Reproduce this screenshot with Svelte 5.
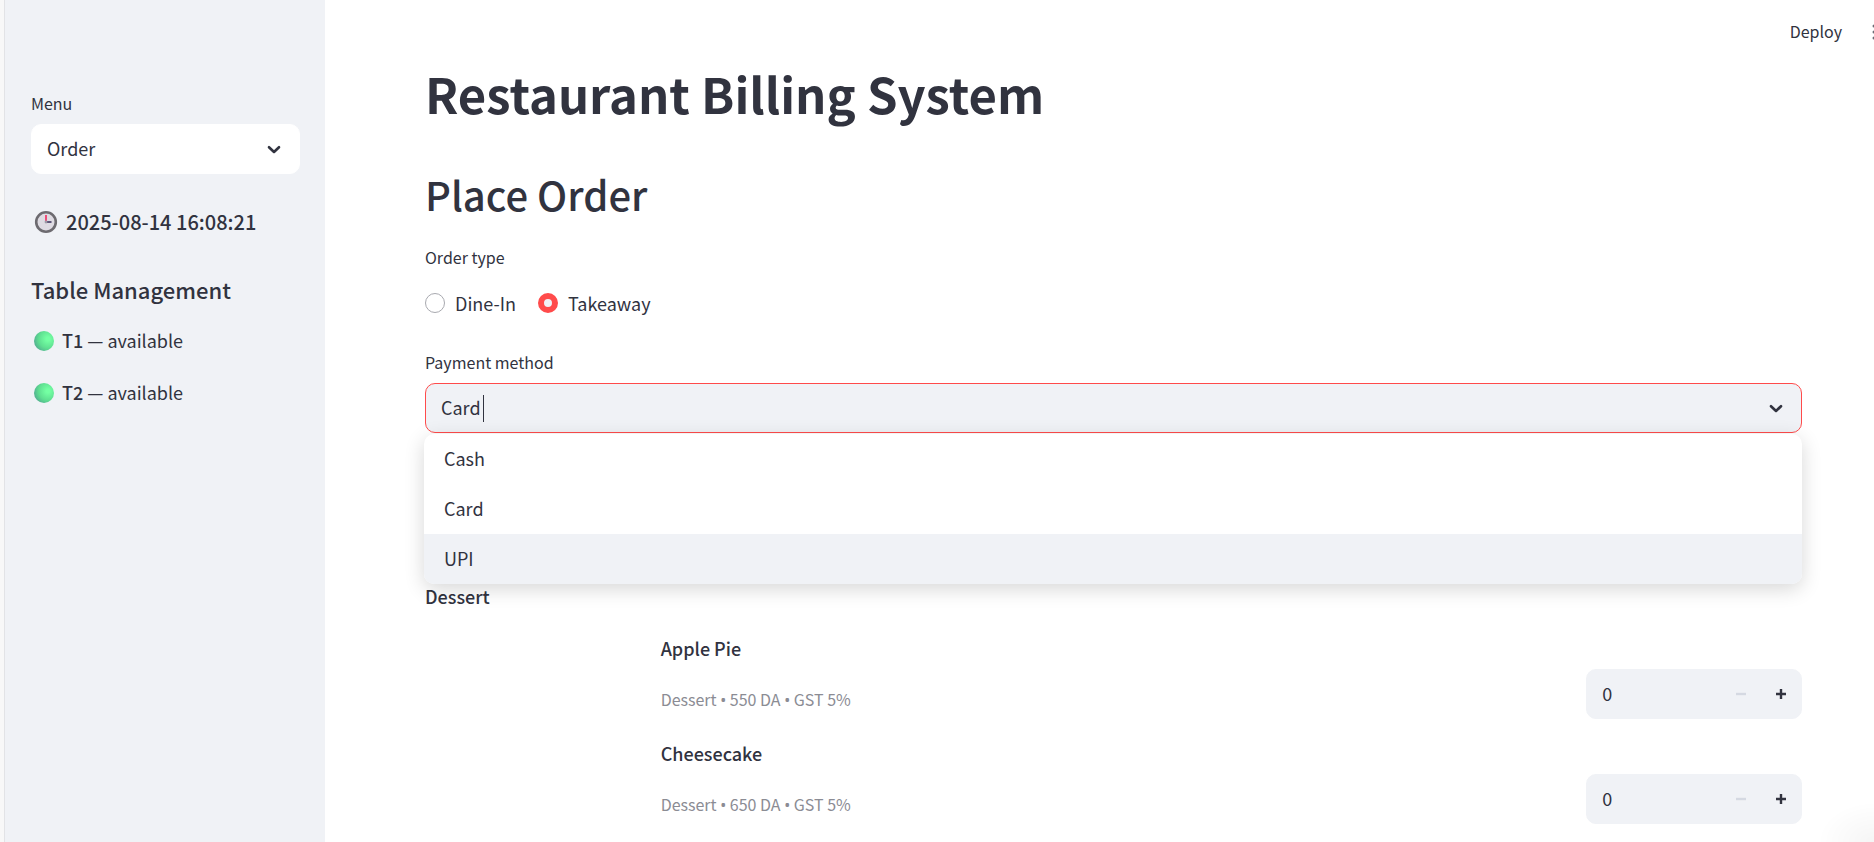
<script>
  let menu = $state('Order');
  let orderType = $state('Takeaway');
  let payment = $state('Card');
  const methods = ['Cash', 'Card', 'UPI'];
  const tables = [
    { name: 'T1', status: 'available' },
    { name: 'T2', status: 'available' }
  ];
  let items = $state([
    { id: 'apple-pie', name: 'Apple Pie', price: 550, qty: 0 },
    { id: 'cheesecake', name: 'Cheesecake', price: 650, qty: 0 }
  ]);
</script>

{#snippet chevron()}
  <svg class="chevron" viewBox="0 0 14 10" aria-hidden="true"><path d="M2 2.2 L7 7 L12 2.2" /></svg>
{/snippet}

<div class="app">
  <aside>
    <div class="field">
      <label for="menu">Menu</label>
      <div class="control light">
        <select id="menu" bind:value={menu}>
          <option>Order</option>
        </select>
        {@render chevron()}
      </div>
    </div>

    <h4>
      <svg class="clock" viewBox="0 0 24 24" aria-hidden="true">
        <circle cx="12" cy="12" r="9.8" fill="#dedbe2" stroke="#6d6b70" stroke-width="2.6" />
        <path d="M12 12V5" stroke="#ee4d78" stroke-width="2" />
        <path d="M12 12H17.5" stroke="#3e3560" stroke-width="1.6" />
        <circle cx="12" cy="12" r="1.4" fill="#9c99a5" />
      </svg>
      <time>2025-08-14 16:08:21</time>
    </h4>

    <h3>Table Management</h3>
    <ul>
      {#each tables as t}
        <li><span class="dot"></span><span class="status"><strong>{t.name}</strong> — {t.status}</span></li>
      {/each}
    </ul>
  </aside>

  <div class="page">
    <header>
      <button class="deploy">Deploy</button>
      <button class="more" aria-label="Options">
        <svg viewBox="0 0 4 18" aria-hidden="true">
          <circle cx="2" cy="3" r="1.5" /><circle cx="2" cy="9" r="1.5" /><circle cx="2" cy="15" r="1.5" />
        </svg>
      </button>
    </header>

    <main>
      <h1>Restaurant Billing System</h1>
      <h2>Place Order</h2>

      <fieldset>
        <legend>Order type</legend>
        <div class="radios">
          {#each ['Dine-In', 'Takeaway'] as option}
            <label><input type="radio" name="order-type" value={option} bind:group={orderType} />{option}</label>
          {/each}
        </div>
      </fieldset>

      <div class="field">
        <label for="payment">Payment method</label>
        <div class="control focused">
          <input id="payment" type="text" role="combobox" aria-expanded="true" aria-controls="methods" bind:value={payment} />
          <span class="caret"></span>
          {@render chevron()}
          <ul class="options" id="methods" role="listbox">
            {#each methods as m}
              <li role="option" aria-selected={m === payment} class:active={m === 'UPI'}>{m}</li>
            {/each}
          </ul>
        </div>
      </div>

      <section>
        <h5>Dessert</h5>
        {#each items as item}
          <div class="item">
            <div class="info">
              <label for={item.id}>{item.name}</label>
              <p>Dessert <span class="bullet">•</span> {item.price} DA <span class="bullet">•</span> GST 5%</p>
            </div>
            <div class="control stepper">
              <input id={item.id} type="text" inputmode="numeric" bind:value={item.qty} />
              <button aria-label="Decrease" disabled={item.qty <= 0} onclick={() => item.qty--}>
                <svg viewBox="0 0 10 10" aria-hidden="true"><path d="M0 5H10" /></svg>
              </button>
              <button aria-label="Increase" onclick={() => item.qty++}>
                <svg viewBox="0 0 10 10" aria-hidden="true"><path d="M0 5H10M5 0V10" /></svg>
              </button>
            </div>
          </div>
        {/each}
      </section>
    </main>
  </div>
  <div class="glow"></div>
</div>

<style>
  :global(body) { margin: 0; overflow: hidden; }
  * { box-sizing: border-box; }
  .app {
    display: flex;
    min-height: 100vh;
    background: #fff;
    border-left: 4px solid #f8f8f8;
    color: #31333f;
    font: 18px/32px "Noto Sans CJK SC", "Noto Sans", sans-serif;
  }
  h1, h2, h3, h4, h5, p, ul, fieldset { margin: 0; padding: 0; border: 0; }
  ul { list-style: none; }
  input, select, button { font: inherit; color: inherit; border: 0; background: none; padding: 0; margin: 0; outline: 0; }
  aside {
    flex: 0 0 321px;
    background: #f0f2f6;
    border-left: 1px solid #e2e3e6;
    padding: 90px 25px 0 26px;
  }
  .field > label, legend { display: block; font-size: 16px; line-height: 28px; padding: 0; }
  .field > label { line-height: 26px; margin-bottom: 8px; }
  .control {
    position: relative;
    display: flex;
    align-items: center;
    height: 50px;
    border-radius: 10px;
    background: #f0f2f6;
    border: 1px solid #f0f2f6;
  }
  .light { background: #fff; border-color: #fff; }
  .control select, .control input { flex: 1; min-width: 0; width: 100%; height: 100%; padding: 0 0 2px 15px; appearance: none; }
  .chevron { position: absolute; top: 20px; right: 18px; width: 14px; height: 10px; pointer-events: none; }
  .chevron path { fill: none; stroke: #31333f; stroke-width: 2.6; stroke-linecap: round; stroke-linejoin: round; }
  h4 { display: flex; align-items: center; gap: 8px; margin-top: 32px; padding-left: 3px; font-size: 20px; line-height: 32px; font-weight: 500; }
  .clock { width: 24px; height: 24px; }
  h3 { margin-top: 35px; font-size: 22px; line-height: 32px; font-weight: 500; }
  aside ul { display: grid; gap: 18px; margin-top: 19px; }
  aside li { display: flex; align-items: center; gap: 8px; padding-left: 3px; }
  .status { padding-bottom: 2px; }
  .dot { width: 20px; height: 20px; border-radius: 50%; background: radial-gradient(circle at 70% 40%, #74ffa3 10%, #5fdf91 50%, #4a948f 95%); }
  strong, h5, .info label { font-size: 18px; font-weight: 500; }

  .page { flex: 1; min-width: 0; }
  header { display: flex; align-items: center; justify-content: flex-end; gap: 30px; height: 64px; overflow: hidden; }
  .deploy { font-size: 16px; padding-bottom: 2px; }
  .more { width: 2px; height: 18px; overflow: hidden; }
  .more svg { display: block; width: 4px; height: 18px; fill: #6b6c75; }
  main { padding: 0 72px 0 100px; }
  h1 { font-size: 49px; line-height: 58px; font-weight: 700; }
  h2 { margin-top: 45px; font-size: 40px; line-height: 54px; font-weight: 500; }
  fieldset { margin-top: 22px; }
  .radios { display: flex; gap: 22px; margin: 16px 0 30px; }
  .radios label { display: flex; align-items: center; gap: 10px; }
  .radios input { appearance: none; width: 20px; height: 20px; border-radius: 50%; border: 1px solid #a8a9af; background: #fff; }
  .radios input:checked { border: 6px solid #ff4b4b; background: #f0f2f6; }
  .focused { border-color: #ff4b4b; }
  .caret { position: absolute; left: 57px; width: 1px; height: 27px; background: #31333f; }
  .options {
    position: absolute;
    z-index: 1;
    top: 50px;
    left: -2px;
    right: -1px;
    border-radius: 10px;
    overflow: hidden;
    background: #fff;
    box-shadow: 0 5px 20px rgba(0, 0, 0, 0.16);
  }
  .options li { height: 50px; padding-left: 20px; line-height: 48px; }
  .active { background: #f0f2f6; }
  section { display: grid; gap: 18px; margin-top: 147px; }
  h5 { margin-bottom: 2px; }
  .item { display: grid; grid-template-columns: 5fr 21fr 5fr; gap: 20px; height: 87px; }
  .info { grid-column: 2; }
  .info label { display: block; }
  .info p { margin-top: 20px; font-size: 16px; line-height: 30px; color: #8b8c94; }
  .bullet { font-family: "Noto Sans", sans-serif; line-height: 1; }
  .stepper { margin-top: 37px; }
  .stepper button { display: grid; place-items: center; flex: 0 0 40px; height: 100%; }
  .stepper svg { width: 10px; height: 10px; }
  .stepper path { stroke: #31333f; stroke-width: 2.4; }
  .stepper button:disabled path { stroke: #d5d9e2; }
  .glow {
    position: fixed;
    right: 0;
    bottom: 0;
    width: 56px;
    height: 40px;
    pointer-events: none;
    background: radial-gradient(ellipse farthest-side at 100% 100%, rgba(0, 0, 0, 0.04), transparent);
  }
</style>
